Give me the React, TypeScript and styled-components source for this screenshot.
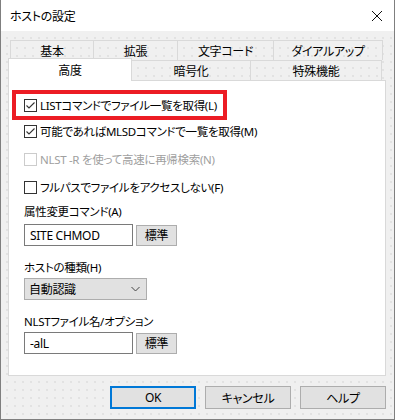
import React from 'react';
import styled, { createGlobalStyle, css } from 'styled-components';

const GlobalStyle = createGlobalStyle`
  html, body {
    margin: 0;
    padding: 0;
    background: #ffffff;
  }
  body {
    font-family: "Noto Sans", "Noto Sans CJK JP", sans-serif;
    font-size: 11.5px;
    font-feature-settings: "palt";
    letter-spacing: -0.3px;
    color: #000;
  }
`;

const dots = css`
  background-color: #f0f0f0;
  background-image: radial-gradient(circle, #dadada 0.6px, transparent 0.9px);
  background-size: 8px 8px;
  background-position: 2px 3px;
`;

const Window = styled.div`
  width: 395px;
  height: 420px;
  box-sizing: border-box;
  border: 1px solid #7f7f7f;
  border-top: none;
  display: flex;
  flex-direction: column;
  overflow: hidden;
`;

const TitleBar = styled.div`
  height: 31px;
  flex: none;
  background: #fff;
  display: flex;
  align-items: center;
  justify-content: space-between;
  padding: 0 8px 0 9px;
  font-size: 12px;
`;

const CloseIcon = styled.svg`
  width: 12px;
  height: 12px;
  margin-right: 3px;
`;

const Body = styled.div`
  ${dots};
  flex: 1;
  display: flex;
  flex-direction: column;
  padding: 9px 8px 0 7px;
`;

const TabRow = styled.div`
  display: flex;
  height: 20px;
  margin: 0 2px 0 2px;
`;

const Tab = styled.div<{ $w: number; $active?: boolean }>`
  ${dots};
  width: ${p => p.$w}px;
  box-sizing: border-box;
  flex: none;
  display: flex;
  align-items: center;
  justify-content: center;
  border: 1px solid #d9d9d9;
  border-bottom: none;
  margin-left: -1px;
  padding-top: 1px;
  font-size: 12px;
  white-space: nowrap;
  &:first-child {
    margin-left: 0;
  }
  ${p =>
    p.$active &&
    css`
      background: #fff;
      background-image: none;
      position: relative;
      z-index: 2;
      height: 23px;
      margin: -2px 0 -1px -2px !important;
      align-items: flex-start;
      padding-top: 2px;
    `}
`;

const Panel = styled.div`
  background: #fff;
  border: 1px solid #d9d9d9;
  height: 296px;
  box-sizing: border-box;
  display: flex;
  flex-direction: column;
  align-items: flex-start;
  padding: 9px 0 0 15px;
  position: relative;
  z-index: 1;
`;

const Highlight = styled.div`
  height: 30px;
  box-sizing: border-box;
  border: 4px solid #ec1c24;
  margin-left: -12px;
  margin-bottom: -3px;
  padding: 0 6px 0 8px;
  display: flex;
  align-items: center;
`;

const CheckRow = styled.label<{ $disabled?: boolean }>`
  display: flex;
  align-items: center;
  height: 28px;
  gap: 3px;
  white-space: nowrap;
  color: ${p => (p.$disabled ? '#a0a0a0' : '#000')};
`;

const Box = styled.span<{ $disabled?: boolean }>`
  width: 13px;
  height: 13px;
  box-sizing: border-box;
  border: 1px solid ${p => (p.$disabled ? '#cccccc' : '#333333')};
  background: #fff;
  flex: none;
  display: flex;
  align-items: center;
  justify-content: center;
`;

const FieldLabel = styled.div<{ $top: number }>`
  margin-top: ${p => p.$top}px;
  height: 16px;
  line-height: 16px;
  white-space: nowrap;
`;

const FieldRow = styled.div<{ $top: number }>`
  display: flex;
  align-items: center;
  gap: 3px;
  margin-top: ${p => p.$top}px;
`;

const TextBox = styled.div`
  width: 109px;
  height: 22px;
  box-sizing: border-box;
  border: 1px solid #7a7a7a;
  background: #fff;
  display: flex;
  align-items: center;
  padding-left: 5px;
  font-size: 12px;
`;

const SmallButton = styled.div`
  width: 41px;
  height: 21px;
  box-sizing: border-box;
  border: 1px solid #adadad;
  background: #e1e1e1;
  display: flex;
  align-items: center;
  justify-content: center;
  font-size: 12px;
`;

const Select = styled.div`
  width: 123px;
  height: 22px;
  box-sizing: border-box;
  border: 1px solid #adadad;
  background: #e1e1e1;
  display: flex;
  align-items: center;
  justify-content: space-between;
  padding: 0 6px 0 4px;
  margin-top: 2px;
  font-size: 12px;
`;

const Footer = styled.div`
  display: flex;
  justify-content: flex-end;
  gap: 9px;
  margin-top: 10px;
`;

const DialogButton = styled.div<{ $default?: boolean }>`
  width: 86px;
  height: 23px;
  box-sizing: border-box;
  background: #e1e1e1;
  border: ${p => (p.$default ? '2px solid #0078d7' : '1px solid #adadad')};
  display: flex;
  align-items: center;
  justify-content: center;
  font-size: 12px;
`;

const Check = ({ checked, disabled }: { checked?: boolean; disabled?: boolean }) => (
  <Box $disabled={disabled}>
    {checked && (
      <svg width="11" height="11" viewBox="0 0 11 11">
        <polyline points="1.5,5.5 4,8 9.5,2.5" fill="none" stroke="#333" strokeWidth="1.1" />
      </svg>
    )}
  </Box>
);

const Chevron = () => (
  <svg width="9" height="6" viewBox="0 0 9 6">
    <polyline points="0.5,1 4.5,5 8.5,1" fill="none" stroke="#444" strokeWidth="1" />
  </svg>
);

export default function App() {
  return (
    <>
      <GlobalStyle />
      <Window>
        <TitleBar>
          <span>ホストの設定</span>
          <CloseIcon viewBox="0 0 12 12">
            <path d="M1 1 L11 11 M11 1 L1 11" stroke="#111" strokeWidth="1" />
          </CloseIcon>
        </TitleBar>
        <Body>
          <TabRow>
            <Tab $w={84}>基本</Tab>
            <Tab $w={85}>拡張</Tab>
            <Tab $w={97}>文字コード</Tab>
            <Tab $w={110}>ダイアルアップ</Tab>
          </TabRow>
          <TabRow>
            <Tab $w={124} $active>高度</Tab>
            <Tab $w={120}>暗号化</Tab>
            <Tab $w={132}>特殊機能</Tab>
          </TabRow>
          <Panel>
            <Highlight>
              <CheckRow>
                <Check checked />
                LISTコマンドでファイル一覧を取得(L)
              </CheckRow>
            </Highlight>
            <CheckRow>
              <Check checked />
              可能であればMLSDコマンドで一覧を取得(M)
            </CheckRow>
            <CheckRow $disabled>
              <Check disabled />
              NLST -R を使って高速に再帰検索(N)
            </CheckRow>
            <CheckRow>
              <Check />
              フルパスでファイルをアクセスしない(F)
            </CheckRow>
            <FieldLabel $top={3}>属性変更コマンド(A)</FieldLabel>
            <FieldRow $top={4}>
              <TextBox>SITE CHMOD</TextBox>
              <SmallButton>標準</SmallButton>
            </FieldRow>
            <FieldLabel $top={14}>ホストの種類(H)</FieldLabel>
            <Select>
              <span>自動認識</span>
              <Chevron />
            </Select>
            <FieldLabel $top={14}>NLSTファイル名/オプション</FieldLabel>
            <FieldRow $top={2}>
              <TextBox>-alL</TextBox>
              <SmallButton>標準</SmallButton>
            </FieldRow>
          </Panel>
          <Footer>
            <DialogButton $default>OK</DialogButton>
            <DialogButton>キャンセル</DialogButton>
            <DialogButton>ヘルプ</DialogButton>
          </Footer>
        </Body>
      </Window>
    </>
  );
}
